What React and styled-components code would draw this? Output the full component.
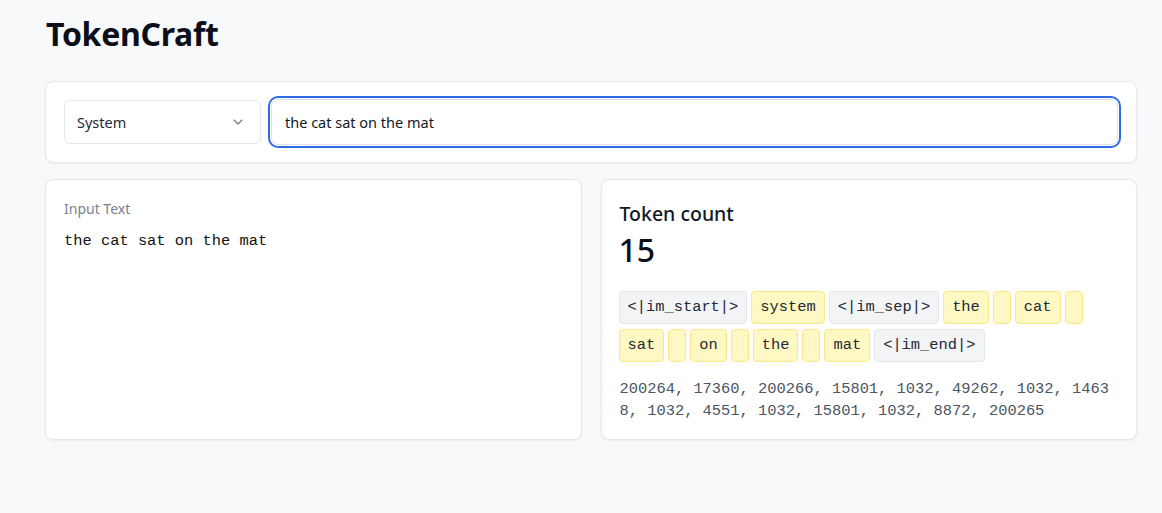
import React, { useState } from "react";
import styled, { createGlobalStyle } from "styled-components";
import { ChevronDown } from "lucide-react";

const GlobalStyle = createGlobalStyle`
  html, body {
    margin: 0;
    padding: 0;
    background: #f8f9fb;
    font-family: "Noto Sans", "Open Sans", sans-serif;
    color: #111827;
  }
  * { box-sizing: border-box; }
`;

const Page = styled.div`
  padding: 12px 25px 40px 45px;
  display: flex;
  flex-direction: column;
`;

const Title = styled.h1`
  margin: 0 0 25px 1px;
  font-size: 32px;
  line-height: 44px;
  font-weight: 700;
  letter-spacing: -0.3px;
  color: #0b0f19;
`;

const Card = styled.div`
  background: #fff;
  border: 1px solid #e5e7eb;
  border-radius: 8px;
  box-shadow: 0 1px 2px rgba(15, 23, 42, 0.05);
  padding: 18px;
`;

const Toolbar = styled(Card)`
  display: flex;
  align-items: center;
  gap: 8px;
  padding: 17px 16px 17px 18px;
  margin-bottom: 16px;
`;

const SelectBox = styled.div`
  width: 197px;
  height: 44px;
  flex-shrink: 0;
  display: flex;
  align-items: center;
  justify-content: space-between;
  padding: 0 14px 0 12px;
  border: 1px solid #e5e7eb;
  border-radius: 6px;
  font-size: 14.5px;
  color: #1f2937;
  svg { color: #6b7280; }
`;

const TextInput = styled.input`
  flex: 1;
  height: 46px;
  margin: 0 2px;
  border: 1px solid #dfe3ea;
  border-radius: 7px;
  padding: 0 13px;
  font-family: "Noto Sans", sans-serif;
  font-size: 14.5px;
  color: #111827;
  outline: none;
  box-shadow: 0 0 0 1px #fff, 0 0 0 3px #2f6be4;
`;

const Columns = styled.div`
  display: grid;
  grid-template-columns: 1fr 1fr;
  gap: 19px;
`;

const Panel = styled(Card)`
  height: 261px;
  padding: 20px 18px 18px 17px;
`;

const Label = styled.div`
  font-size: 14px;
  line-height: 18px;
  color: #7b818c;
  margin: 0 0 12px 1px;
`;

const Mono = styled.div`
  font-family: "Liberation Mono", "DejaVu Sans Mono", monospace;
  font-size: 15.4px;
  line-height: 22px;
  padding-left: 1px;
  color: ${(p) => (p.$muted ? "#4b5563" : "#111111")};
  word-break: break-all;
`;

const CountLabel = styled.div`
  font-size: 19.5px;
  line-height: 26px;
  font-weight: 500;
  color: #111827;
  margin: 1px 0 0 1px;
`;

const CountValue = styled.div`
  font-size: 32px;
  line-height: 42px;
  font-weight: 500;
  color: #0b0f19;
  margin: 2px 0 20px;
`;

const Tokens = styled.div`
  display: flex;
  flex-wrap: wrap;
  gap: 5px 4px;
  margin-bottom: 16px;
`;

const Token = styled.span`
  display: inline-block;
  height: 33px;
  min-width: 18px;
  padding: 0 8px;
  border-radius: 4px;
  font-family: "Liberation Mono", "DejaVu Sans Mono", monospace;
  font-size: 15.4px;
  line-height: 31px;
  color: #1f2937;
  background: ${(p) => (p.$special ? "#f3f4f6" : "#fef9c3")};
  border: 1px solid ${(p) => (p.$special ? "#e5e7eb" : "#fde68a")};
`;

const tokens = [
  { t: "<|im_start|>", s: true },
  { t: "system" },
  { t: "<|im_sep|>", s: true },
  { t: "the" },
  { t: " " },
  { t: "cat" },
  { t: " " },
  { t: "sat" },
  { t: " " },
  { t: "on" },
  { t: " " },
  { t: "the" },
  { t: " " },
  { t: "mat" },
  { t: "<|im_end|>", s: true },
];

const ids = [200264, 17360, 200266, 15801, 1032, 49262, 1032, 14638, 1032, 4551, 1032, 15801, 1032, 8872, 200265];

export default function App() {
  const [text, setText] = useState("the cat sat on the mat");
  return (
    <>
      <GlobalStyle />
      <Page>
        <Title>TokenCraft</Title>
        <Toolbar>
          <SelectBox>
            <span>System</span>
            <ChevronDown size={16} strokeWidth={1.75} />
          </SelectBox>
          <TextInput value={text} onChange={(e) => setText(e.target.value)} />
        </Toolbar>
        <Columns>
          <Panel>
            <Label>Input Text</Label>
            <Mono>{text}</Mono>
          </Panel>
          <Panel>
            <CountLabel>Token count</CountLabel>
            <CountValue>{tokens.length}</CountValue>
            <Tokens>
              {tokens.map((tk, i) => (
                <Token key={i} $special={tk.s}>{tk.t.trim()}</Token>
              ))}
            </Tokens>
            <Mono $muted>{ids.join(", ")}</Mono>
          </Panel>
        </Columns>
      </Page>
    </>
  );
}
